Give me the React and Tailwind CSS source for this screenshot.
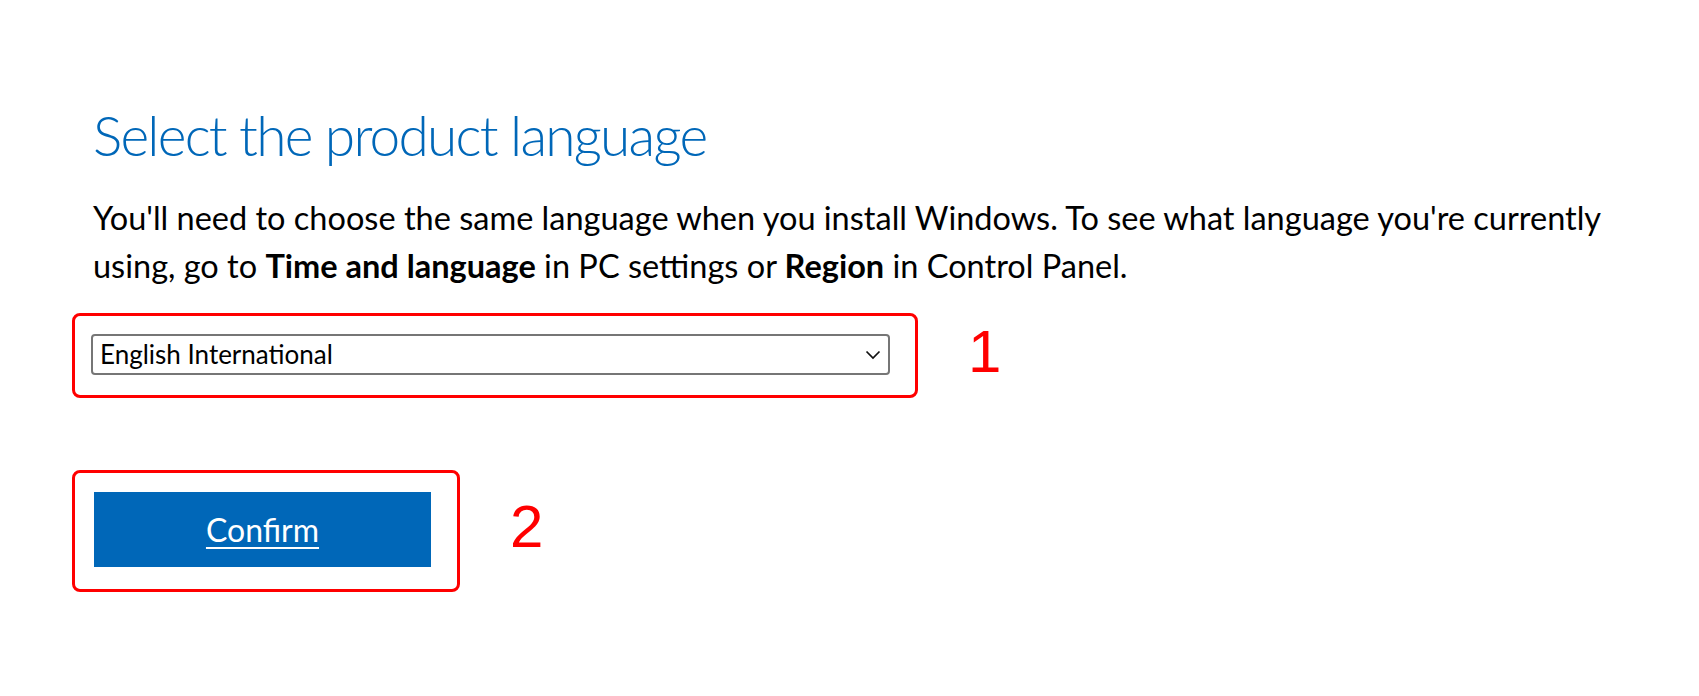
import React from 'react';

const Chevron = () => (
  <svg width="16" height="10" viewBox="0 0 16 10" fill="none">
    <path d="M1.5 1.5 L8 8 L14.5 1.5" stroke="#111" strokeWidth="1.7" />
  </svg>
);

const App = () => {
  return (
    <div className="min-h-[696px] w-full bg-white pl-[72px] pt-[99px] font-['Lato',sans-serif]">
      <h1 className="pl-[21px] text-[55px] font-light leading-[72px] tracking-[-1.75px] text-[#0067b8]">
        Select the product language
      </h1>
      <p className="mt-[23px] w-[1571px] pl-[21px] text-[32.5px] leading-[48px] text-black">
        <span>You'll need to choose the same language when you install Windows. To see what language you're currently</span>
        <br />
        <span>using, go to </span>
        <strong className="font-bold">Time and language</strong>
        <span> in PC settings or </span>
        <strong className="font-bold">Region</strong>
        <span> in Control Panel.</span>
      </p>

      <div className="mt-[23px] flex items-center">
        <div className="w-[846px] rounded-[8px] border-[3px] border-[#ff0000] pb-[20px] pl-[16px] pt-[18px]">
          <div className="flex h-[41px] w-[799px] items-center justify-between rounded-[4px] border-2 border-[#767676] pl-[7px] pr-[7px] text-[26px] text-black">
            <span>English International</span>
            <Chevron />
          </div>
        </div>
        <span className="mb-[8px] ml-[50px] font-['Liberation_Sans',sans-serif] text-[60px] leading-none text-[#ff0000]">1</span>
      </div>

      <div className="mt-[72px] flex items-center">
        <div className="w-[388px] rounded-[8px] border-[3px] border-[#ff0000] pb-[22px] pl-[19px] pt-[19px]">
          <button className="flex h-[75px] w-[337px] items-center justify-center bg-[#0067b8] text-[32px] text-white underline decoration-2 underline-offset-[5px]">
            Confirm
          </button>
        </div>
        <span className="mb-[8px] ml-[50px] font-['Liberation_Sans',sans-serif] text-[60px] leading-none text-[#ff0000]">2</span>
      </div>
    </div>
  );
};

export default App;
